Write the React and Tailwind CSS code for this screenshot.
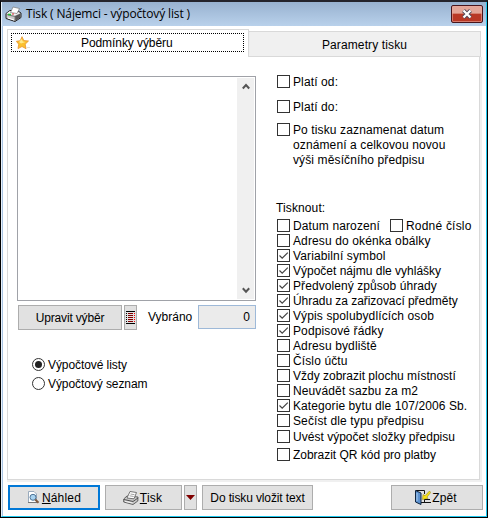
import React, { useState } from 'react';

const PRINT_OPTIONS = [
  { id: 'address', label: 'Adresu do okénka obálky', checked: false },
  { id: 'symbol', label: 'Variabilní symbol', checked: true },
  { id: 'rent', label: 'Výpočet nájmu dle vyhlášky', checked: true, spacing: 'tracking-[0]' },
  { id: 'payment', label: 'Předvolený způsob úhrady', checked: true, spacing: 'tracking-[0.07px]' },
  { id: 'equipment', label: 'Úhradu za zařizovací předměty', checked: true, spacing: 'tracking-[-0.05px]' },
  { id: 'persons', label: 'Výpis spolubydlících osob', checked: true },
  { id: 'signatures', label: 'Podpisové řádky', checked: true },
  { id: 'residence', label: 'Adresu bydliště', checked: false },
  { id: 'account', label: 'Číslo účtu', checked: false },
  { id: 'area', label: 'Vždy zobrazit plochu místností', checked: false, spacing: 'tracking-[0]' },
  { id: 'rate', label: 'Neuvádět sazbu za m2', checked: false },
  { id: 'category', label: 'Kategorie bytu dle 107/2006 Sb.', checked: true, spacing: 'tracking-[0.09px]' },
  { id: 'sum', label: 'Sečíst dle typu předpisu', checked: false },
];

function PrinterIcon() {
  return (
    <svg width="17" height="16" viewBox="0 0 17 16" className="shrink-0">
      <path d="M1 7.5 5 4.5 13 5 16 7V11.5L10 15.5 1 12.5Z" fill="#c9c9c9" stroke="#222" />
      <path d="M1.5 7.5 5 5 15 7 10 9.5Z" fill="#f2f2f2" />
      <path d="M10 10 15.5 7.5V11.5L10 15Z" fill="#555" />
      <path d="M5.5 6.5 8 1 14.5 2.5 12 7.5Z" fill="#fff" stroke="#777" strokeWidth=".7" />
      <path d="M1.5 8.5 10 10.5V15" fill="none" stroke="#777" />
      <path d="M3 12 9 14" stroke="#fff" />
      <path d="M3 8.5H6" stroke="#20c030" strokeWidth="1.6" />
      <path d="M7 8H9" stroke="#d33" />
    </svg>
  );
}

function GrayPrinterIcon() {
  return (
    <svg width="16" height="16" viewBox="0 0 16 16" className="shrink-0">
      <path d="M.7 9 4 6 15 7 14.8 11 10 14.5.7 12Z" fill="#c8c8c8" stroke="#555" strokeWidth=".9" />
      <path d="M4 8 7 1.5 13.5 2.5 11 8.8Z" fill="#fff" stroke="#666" strokeWidth=".9" />
      <path d="M7.5 4 11.5 4.7M6.5 5.8 10.7 6.5" stroke="#888" strokeWidth=".8" />
      <path d="M1 9.5 10 11.5 15 8" fill="none" stroke="#444" strokeWidth=".9" />
      <path d="M2 11.3 9.5 13" stroke="#f4f4f4" />
    </svg>
  );
}

function StarIcon() {
  return (
    <svg width="14" height="14" viewBox="0 0 14 14" className="shrink-0">
      <path d="M6 .7 7.8 4.6 12.5 5 9.2 8.2 10 12.7 6 10.5 2 12.6 2.7 8.2 .4 5.3 4.3 4.7Z" fill="#fbc02d" stroke="#e8932c" strokeWidth=".8" />
      <path d="M5.8 3 6.8 5.5 9.5 6 5 7.5 3 6Z" fill="#ffe98a" />
      <path d="M11 11.5h3" stroke="#ddd" />
    </svg>
  );
}

function PreviewIcon() {
  return (
    <svg width="13" height="13" viewBox="0 0 13 13" className="shrink-0">
      <path d="M1.5 .5H7L9.5 3V11.5H1.5Z" fill="#fff" stroke="#9aabbd" />
      <path d="M1 11.5H10" stroke="#777" />
      <circle cx="6" cy="6.3" r="3" fill="#a9d3f0" stroke="#4e7396" />
      <path d="M8.2 8.5 11.5 11.8" stroke="#805b40" strokeWidth="2" />
    </svg>
  );
}

function ExitIcon() {
  return (
    <svg width="16" height="15" viewBox="0 0 16 15" className="shrink-0">
      <path d="M1 .5H9.5V4M9.5 8V12.5H6" fill="none" stroke="#111" />
      <path d="M.5 .5 6 3V14.5L.5 12Z" fill="#5c91cf" stroke="#10253f" />
      <path d="M2 3V11" stroke="#a8cdf0" />
      <path d="M7.5 9.5 8 4.5 10 5.8 14.5 1 15.7 2.5 12 7 13 8.5Z" fill="#f7e017" stroke="#8a7a00" strokeWidth=".5" />
      <path d="M10 9.5H15M9 12.5H16" stroke="#111" />
    </svg>
  );
}

function ListIcon() {
  return (
    <svg width="9" height="13" viewBox="0 0 9 13" className="shrink-0" shapeRendering="crispEdges">
      <path d="M0 .5H9M0 12.5H9" stroke="#000" />
      <path d="M2 2.5H7M2 4.5H7M2 6.5H7M2 8.5H7M2 10.5H7" stroke="#800000" />
      <path d="M.5 2V12" stroke="#000" strokeDasharray="1 1" />
      <path d="M8.5 2V12" stroke="#f00" strokeDasharray="1 1" />
    </svg>
  );
}

function ScrollArrow({ down }) {
  return (
    <svg width="8" height="7" viewBox="0 0 8 7">
      <path d={down ? 'M.8 1.3 4 4.7 7.2 1.3' : 'M.8 5.5 4 2 7.2 5.5'} fill="none" stroke="#555" strokeWidth="2" />
    </svg>
  );
}

function Checkbox({ label, defaultChecked = false, className = '' }) {
  const [checked, setChecked] = useState(defaultChecked);

  return (
    <label className={`flex items-start gap-[3px] leading-[15px] ${className}`}>
      <input type="checkbox" className="sr-only" checked={checked} onChange={() => setChecked(!checked)} />
      <span className="mt-px h-[13px] w-[13px] shrink-0 border border-[#333] bg-white">
        {checked && (
          <svg width="11" height="11" viewBox="0 0 11 11">
            <path d="M1.5 5.5 4.2 8.2 9.8 2.6" fill="none" stroke="#444" strokeWidth="1.2" />
          </svg>
        )}
      </span>
      <span className="mt-px -mb-px whitespace-pre">{label}</span>
    </label>
  );
}

function Radio({ label, checked, onChange }) {
  return (
    <label className="flex h-[19px] items-center gap-[3px]">
      <input type="radio" className="sr-only" checked={checked} onChange={onChange} />
      <span className="flex h-[13px] w-[13px] items-center justify-center rounded-full border border-[#333] bg-white">
        {checked && <span className="h-[7px] w-[7px] rounded-full bg-[#222]" />}
      </span>
      <span className="tracking-[-0.08px]">{label}</span>
    </label>
  );
}

function Button({ className = '', children }) {
  return (
    <button className={`flex h-[25px] shrink-0 items-center justify-center whitespace-nowrap bg-[#e1e1e1] ${className}`}>
      {children}
    </button>
  );
}

function App() {
  const [sheet, setSheet] = useState('listy');

  return (
    <div className="flex h-[518px] w-[488px] flex-col overflow-hidden border-t-2 border-r border-b border-l border-t-[#24242c] border-r-black border-b-black border-l-black bg-white font-['Liberation_Sans',Arial,sans-serif] text-[12px] tracking-[0.12px] text-black">
      <div className="flex min-h-0 flex-1 flex-col border-r border-b border-l border-r-[#20c8ee] border-b-[#20c8ee] border-l-[#e8f2fc]">
        <header className="flex h-6 shrink-0 items-center bg-linear-to-b from-[#98b2d0] to-[#b9d1eb] pr-[3px] pl-[3px]">
          <PrinterIcon />
          <h1 className="ml-1 flex-1 font-['Open_Sans','Noto_Sans',sans-serif] text-[12px] tracking-[-0.14px] whitespace-nowrap">
            Tisk ( Nájemci - výpočtový list )
          </h1>
          <button className="flex h-[18px] w-8 items-center justify-center rounded-[2px] border border-[#48151c] bg-linear-to-b from-[#e3a598] from-45% to-[#b93826] to-50% inset-ring inset-ring-[#e9a99c]/60">
            <svg width="12" height="10" viewBox="0 0 12 10">
              <path d="M2.5 1.5 9.5 8.5M9.5 1.5 2.5 8.5" stroke="#514b5c" strokeWidth="4" />
              <path d="M2.5 1.5 9.5 8.5M9.5 1.5 2.5 8.5" stroke="#fff" strokeWidth="2.2" />
            </svg>
          </button>
        </header>

        <div className="flex min-h-0 flex-1 flex-col border-l border-[#a9c4e2] pt-[3px] pr-[3px] pb-[6px] pl-1">
          <nav className="flex h-[28px] shrink-0 items-end">
            <button className="flex h-full w-[242px] items-start border-t border-r border-l border-[#d9d9d9] bg-white pt-[3px] pl-[3px]">
              <span className="flex h-[19px] w-[233px] items-center border border-dotted border-black pl-1">
                <StarIcon />
                <span className="ml-[51px] tracking-[-0.08px]">Podmínky výběru</span>
              </span>
            </button>
            <button className="h-[26px] w-[232px] border-t border-r border-b border-[#d9d9d9] bg-[#f0f0f0] pt-px">
              Parametry tisku
            </button>
          </nav>

          <main className="mr-px flex min-h-0 flex-1 border-r-2 border-b-2 border-[#f0f0f0]">
            <div className="flex flex-1 border-r border-b border-l border-[#d9d9d9]">
              <section className="flex w-[269px] flex-col pt-[19px] pl-[9px]">
                <div className="flex h-[225px] w-[239px] justify-end border border-[#a0a2a8] p-px">
                  <div className="flex w-[17px] flex-col items-center justify-between bg-[#f0f0f0] py-[5px]">
                    <ScrollArrow />
                    <ScrollArrow down />
                  </div>
                </div>
                <div className="mt-1 ml-px flex items-start">
                  <Button className="w-[104px] border border-[#adadad] tracking-[-0.15px]">Upravit výběr</Button>
                  <Button className="ml-0.5 w-[13px] border border-[#adadad]">
                    <ListIcon />
                  </Button>
                  <span className="ml-[11px] w-[50px] leading-[25px] tracking-[0]">Vybráno</span>
                  <output className="h-6 w-[58px] border border-[#9eb9d8] bg-[#ebebeb] pr-[5px] text-right leading-[22px]">0</output>
                </div>
                <div className="mt-[25px] ml-[15px]">
                  <Radio label="Výpočtové listy" checked={sheet === 'listy'} onChange={() => setSheet('listy')} />
                  <Radio label="Výpočtový seznam" checked={sheet === 'seznam'} onChange={() => setSheet('seznam')} />
                </div>
              </section>

              <section className="flex flex-col pt-[17px]">
                <Checkbox label="Platí od:" />
                <Checkbox className="mt-[10px]" label="Platí do:" />
                <Checkbox className="mt-2" label={'Po tisku zaznamenat datum\noznámení a celkovou novou\nvýši měsíčního předpisu'} />
                <h2 className="mt-[34px] -ml-px leading-[15px]">Tisknout:</h2>
                <div className="mt-0.5 flex">
                  <Checkbox className="w-[113px]" label="Datum narození" />
                  <Checkbox className="tracking-[0.2px]" label="Rodné číslo" />
                </div>
                {PRINT_OPTIONS.map(option => (
                  <Checkbox
                    key={option.id}
                    className={option.spacing}
                    label={option.label}
                    defaultChecked={option.checked}
                  />
                ))}
                <Checkbox className="mt-px tracking-[0.02px]" label="Uvést výpočet složky předpisu" />
                <Checkbox className="mt-[3px] tracking-[-0.02px]" label="Zobrazit QR kód pro platby" />
              </section>
            </div>
          </main>

          <footer className="mt-[3px] flex pl-px">
            <Button className="w-[92px] border-2 border-[#0078d7]">
              <PreviewIcon />
              <span className="ml-0.5 tracking-[0.2px]"><u>N</u>áhled</span>
            </Button>
            <Button className="ml-[5px] w-[77px] border border-[#adadad] pr-0.5">
              <GrayPrinterIcon />
              <span className="ml-px tracking-[0.2px]"><u>T</u>isk</span>
            </Button>
            <Button className="ml-0.5 w-[13px] border border-[#adadad]">
              <svg width="9" height="5" viewBox="0 0 9 5" className="shrink-0">
                <path d="M0 0H9L4.5 5Z" fill="#800000" />
              </svg>
            </Button>
            <Button className="ml-[5px] w-[111px] border border-[#adadad] tracking-[-0.12px]">Do tisku vložit text</Button>
            <Button className="mr-0 ml-auto w-[92px] border border-[#adadad] pr-0.5">
              <ExitIcon />
              <span className="ml-px">Zpět</span>
            </Button>
          </footer>
        </div>
      </div>
    </div>
  );
}

export default App;
